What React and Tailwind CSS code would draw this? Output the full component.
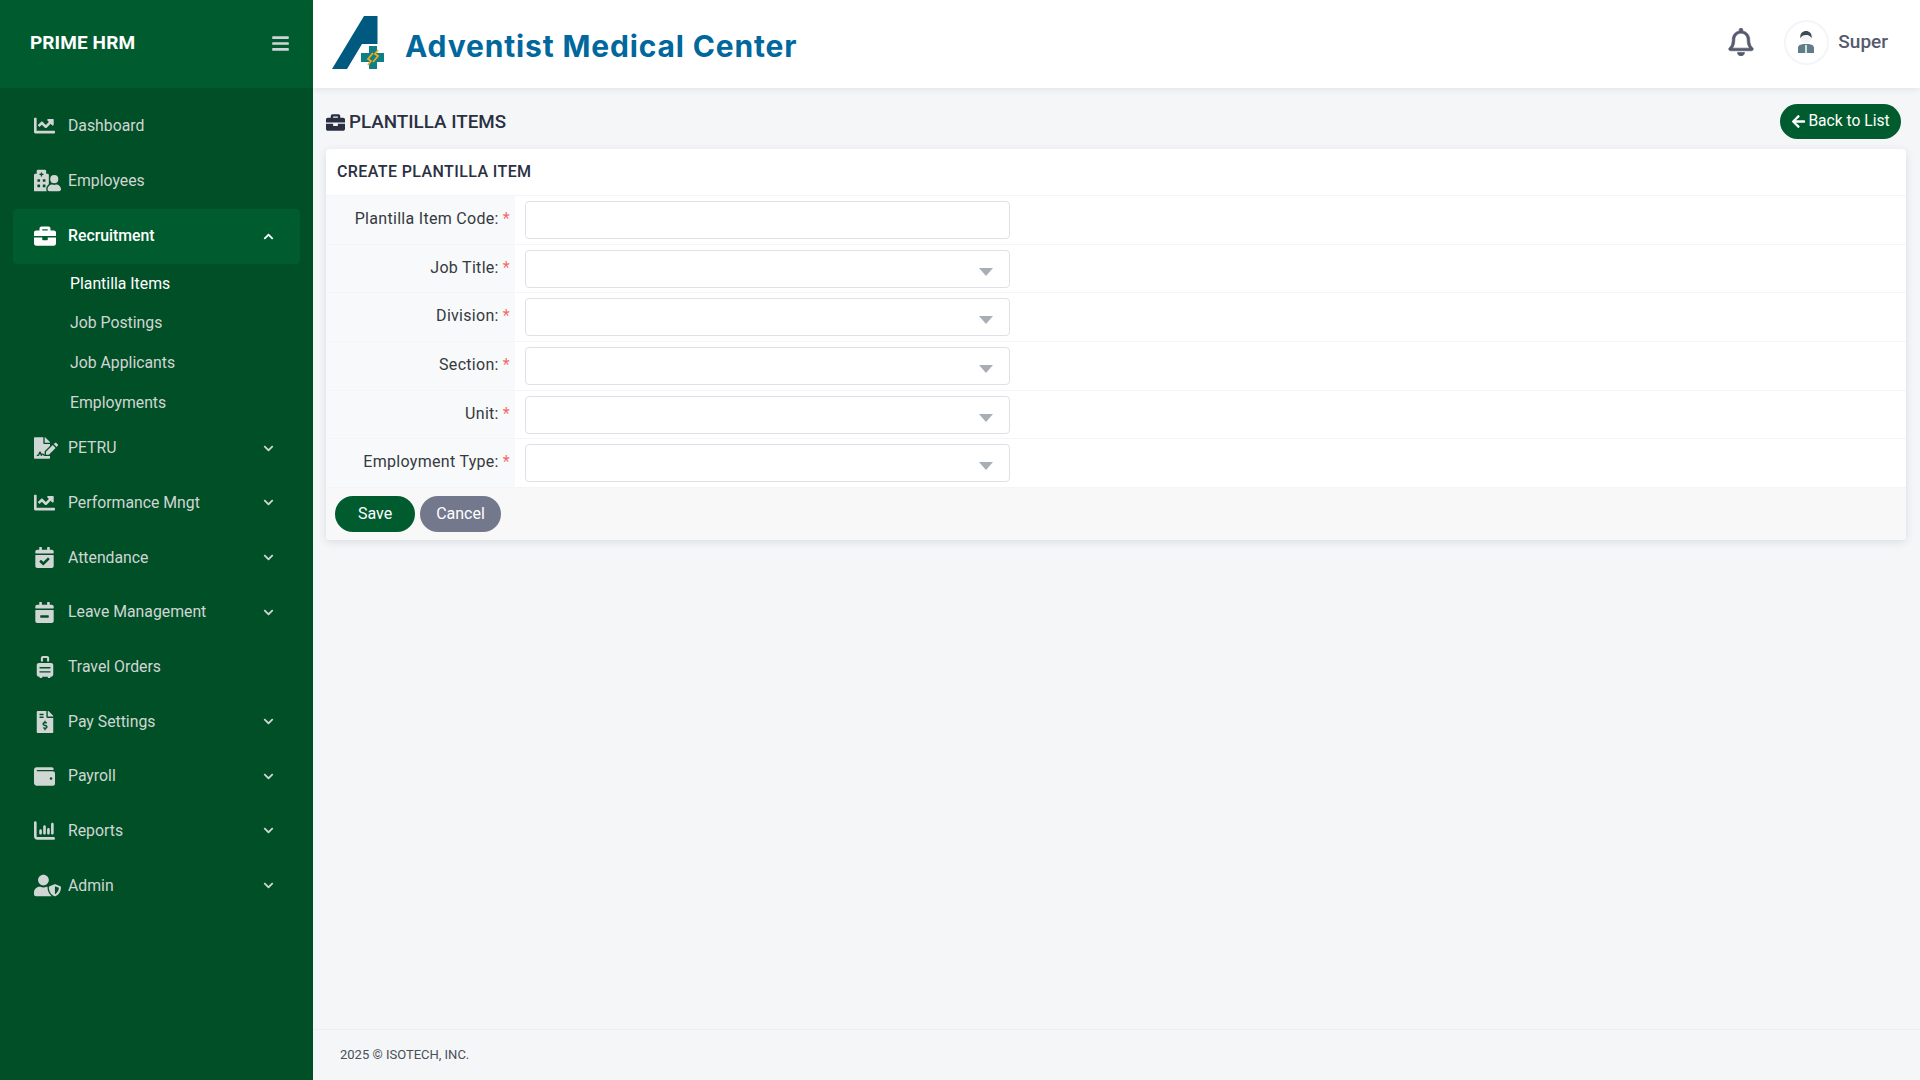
import React from "react";
import { FaChartLine, FaHospitalUser, FaBriefcase, FaFileSignature, FaCalendarCheck, FaCalendarMinus, FaSuitcaseRolling, FaFileInvoiceDollar, FaWallet, FaUserShield, FaBars, FaChevronDown, FaChevronUp, FaArrowLeft, FaRegBell } from "react-icons/fa";
import { FaChartColumn } from "react-icons/fa6";

const menu = [
  { label: "Dashboard", Icon: FaChartLine, w: "text-[21px]" },
  { label: "Employees", Icon: FaHospitalUser, w: "text-[27px]" },
  { label: "Recruitment", Icon: FaBriefcase, open: true, arrow: true, w: "text-[22px]" },
  { label: "PETRU", Icon: FaFileSignature, arrow: true, w: "text-[24px]" },
  { label: "Performance Mngt", Icon: FaChartLine, arrow: true, w: "text-[21px]" },
  { label: "Attendance", Icon: FaCalendarCheck, arrow: true, w: "text-[21px]" },
  { label: "Leave Management", Icon: FaCalendarMinus, arrow: true, w: "text-[21px]" },
  { label: "Travel Orders", Icon: FaSuitcaseRolling, w: "text-[22px]" },
  { label: "Pay Settings", Icon: FaFileInvoiceDollar, arrow: true, w: "text-[22px]" },
  { label: "Payroll", Icon: FaWallet, arrow: true, w: "text-[21px]" },
  { label: "Reports", Icon: FaChartColumn, arrow: true, w: "text-[21px]" },
  { label: "Admin", Icon: FaUserShield, arrow: true, w: "text-[27px]" },
];
const sub = ["Plantilla Items", "Job Postings", "Job Applicants", "Employments"];
const fields = ["Plantilla Item Code:", "Job Title:", "Division:", "Section:", "Unit:", "Employment Type:"];

function Logo() {
  return (
    <svg width="56" height="56" viewBox="0 0 56 56" className="shrink-0">
      <path d="M0 53 L32 0 L45.5 0 L45.5 28 L30 28 L15 53 Z" fill="#005a80" />
      <path d="M29 37 L37 37 L37 30 L45 30 L45 37 L52 37 L52 46 L45 46 L45 53 L37 53 L37 46 L29 46 Z" fill="#0f7f86" />
      <path d="M36 49 L39 45 L36 43 L41 37 M46 34 L43 38 L46 40 L41 46" fill="none" stroke="#f0a91e" strokeWidth="1.8" />
    </svg>
  );
}

function Avatar() {
  return (
    <svg width="18" height="22" viewBox="0 0 18 22">
      <path d="M1 22 L1 17 C1 14 4 13.5 6 13 L12 13 C14 13.5 17 14 17 17 L17 22 Z" fill="#5f7d88" />
      <path d="M8 14 L10 14 L10 22 L8 22 Z" fill="#c8e6da" />
      <circle cx="9" cy="7.5" r="5" fill="#f3f4f6" />
      <path d="M3.5 7.5 C2.5 2 6 0 9 0 C12 0 15.5 2 14.5 7.5 C13.5 4.5 11 4 9 4 C7 4 4.5 4.5 3.5 7.5 Z" fill="#3c4a56" />
    </svg>
  );
}

export default function App() {
  const plex = "font-['Roboto','Noto_Sans',sans-serif]";
  return (
    <div className={`flex h-screen w-full overflow-hidden bg-[#f5f6f8] ${plex}`}>
      <aside className="w-[313px] shrink-0 bg-[#004f27] flex flex-col">
        <div className="h-[88px] shrink-0 bg-[#005c2e] flex items-center justify-between pl-[30px] pr-[23px] pb-[1px]">
          <span className="text-white text-[19px] font-bold tracking-[0.1px]">PRIME HRM</span>
          <FaBars className="text-[#ced4da] text-[19px]" />
        </div>
        <nav className="pt-[10.5px] px-[13px] flex flex-col">
          {menu.map(({ label, Icon, arrow, open, w }) => (
            <React.Fragment key={label}>
              <div className={`h-[54.7px] shrink-0 rounded-[4px] flex items-center pl-[21px] pr-[26px] ${open ? "mt-[1px] bg-[#005c2e] text-white font-medium" : "text-[#d0d6d3]"}`}>
                <span className="w-[34px] shrink-0 flex items-center">
                  <Icon className={w} />
                </span>
                <span className="text-[15.8px] flex-1 whitespace-nowrap">{label}</span>
                {arrow && (open ? <FaChevronUp className="text-[11px]" /> : <FaChevronDown className="text-[11px]" />)}
              </div>
              {open && (
                <div className="flex flex-col mb-[-2px]">
                  {sub.map((s, i) => (
                    <div key={s} className={`h-[39.8px] flex items-center pl-[57px] text-[15.8px] ${i === 0 ? "text-white" : "text-[#d0d6d3]"}`}>{s}</div>
                  ))}
                </div>
              )}
            </React.Fragment>
          ))}
        </nav>
      </aside>
      <main className="flex-1 min-w-0 flex flex-col">
        <header className="h-[88px] shrink-0 bg-white shadow-[0_2px_6px_rgba(18,38,63,0.08)] flex items-center pl-[19px] pr-[32px] relative">
          <Logo />
          <span className="ml-[17px] pt-[5px] font-['Inter',sans-serif] font-bold text-[30px] tracking-[0.85px] text-[#00689c]">Adventist Medical Center</span>
          <div className="ml-auto flex items-center pb-[4px]">
            <FaRegBell className="text-[28px] text-[#555b6d] stroke-[12px]" stroke="currentColor" />
            <div className="ml-[29px] w-[45px] h-[45px] rounded-full border-2 border-[#f4f5f8] flex items-center justify-center pr-[1px]">
              <Avatar />
            </div>
            <span className="ml-[9px] text-[19px] font-medium text-[#555b6d]">Super</span>
          </div>
        </header>
        <div className="flex-1 pl-[13px] pr-[14px] pt-[16px]">
          <div className="flex items-center justify-between h-[35px] pr-[5px]">
            <div className="flex items-center gap-[4px] text-[#2a3042] text-[18.8px] font-medium pt-[1px]">
              <FaBriefcase className="text-[19px]" />
              <span>PLANTILLA ITEMS</span>
            </div>
            <button className="h-[35px] w-[121px] rounded-full bg-[#005c2e] text-white text-[15.6px] flex items-center justify-center gap-[2px]">
              <FaArrowLeft className="text-[15px]" />
              <span>Back to List</span>
            </button>
          </div>
          <section className="mt-[10px] bg-white rounded-[4px] shadow-[0_2px_8px_rgba(18,38,63,0.12)]">
            <div className="h-[47px] flex items-center px-[11px] text-[16px] font-medium tracking-[0.4px] text-[#2a3042] border-b border-[#f4f5f8]">CREATE PLANTILLA ITEM</div>
            {fields.map((f, i) => (
              <div key={f} className="h-[48.7px] flex border-b border-[#f4f5f8]">
                <div className="w-[189px] shrink-0 bg-[#f8f9fb] flex items-start justify-end pt-[11px] pr-[5px] text-[16px] tracking-[0.3px] text-[#343a40]">
                  <span>{f}</span>
                  <span className="ml-[4px] text-[#f46a6a]">*</span>
                </div>
                <div className="pl-[10px] pt-[5px]">
                  <div className="relative w-[485px] h-[38px] bg-white border border-[#dfe1e6] rounded-[4px]">
                    {i > 0 && <span className="absolute right-[16px] top-[17px] w-0 h-0 border-x-[7px] border-x-transparent border-t-[8px] border-t-[#a8aeb6]" />}
                  </div>
                </div>
              </div>
            ))}
            <div className="h-[52px] bg-[#f8f8f9] rounded-b-[4px] flex items-start gap-[5px] pl-[9px] pt-[8px]">
              <button className="h-[36px] w-[80px] rounded-full bg-[#005c2e] text-white text-[16px]">Save</button>
              <button className="h-[36px] w-[81px] rounded-full bg-[#74788d] text-white text-[16px]">Cancel</button>
            </div>
          </section>
        </div>
        <footer className="h-[51px] shrink-0 border-t border-[#eceef1] flex items-center pl-[27px] text-[13px] text-[#495057]">2025 © ISOTECH, INC.</footer>
      </main>
    </div>
  );
}
